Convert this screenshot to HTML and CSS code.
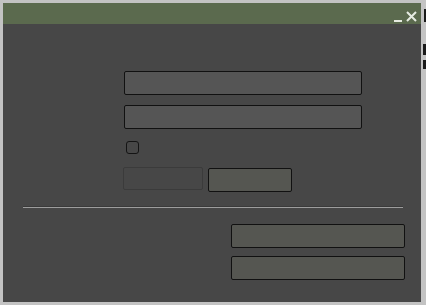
FILE: index.html
```html
<!DOCTYPE html>
<html>
<head>
<meta charset="utf-8">
<link rel="stylesheet" href="styles.css">
</head>
<body>
<div class="screen">
  <div class="window">
    <div class="titlebar">
      <svg class="ctl" width="30" height="14" viewBox="0 0 30 14">
        <rect x="3" y="9" width="8" height="2" fill="#e6ebe2"/>
        <path d="M16 1 L25 10 M25 1 L16 10" stroke="#e6ebe2" stroke-width="2" fill="none"/>
      </svg>
    </div>
    <div class="content">
      <div class="form">
        <div class="field"></div>
        <div class="field tall"></div>
        <div class="check"></div>
        <div class="btnrow">
          <div class="btn disabled"></div>
          <div class="btn"></div>
        </div>
      </div>
      <div class="sep"></div>
      <div class="actions">
        <div class="btn wide"></div>
        <div class="btn wide"></div>
      </div>
    </div>
  </div>
  <div class="side">
    <div class="mark m1"></div>
    <div class="mark m2"></div>
    <div class="mark m3"></div>
  </div>
</div>
</body>
</html>
```

FILE: styles.css
```css
html, body {
  margin: 0;
  padding: 0;
  background: #c3c3c3;
  font-family: "Liberation Sans", sans-serif;
}
.screen {
  display: flex;
  padding-top: 3px;
  padding-left: 3px;
  height: 305px;
  box-sizing: border-box;
}
.window {
  width: 418px;
  height: 299px;
  background: #474747;
  display: flex;
  flex-direction: column;
}
.titlebar {
  height: 21px;
  background: #5b6a4e;
  display: flex;
  justify-content: flex-end;
  align-items: flex-start;
  padding-top: 8px;
  padding-right: 0;
  box-sizing: border-box;
}
.ctl {
  display: block;
}
.content {
  flex: 1;
  display: flex;
  flex-direction: column;
}
.form {
  padding-left: 121px;
  padding-top: 47px;
  display: flex;
  flex-direction: column;
}
.field {
  width: 238px;
  height: 24px;
  box-sizing: border-box;
  background: #555555;
  border: 1px solid #111;
  border-radius: 2px;
}
.field + .field {
  margin-top: 10px;
}
.check {
  margin-top: 12px;
  margin-left: 2px;
  width: 13px;
  height: 13px;
  box-sizing: border-box;
  border: 1px solid #141414;
  border-radius: 3px;
  background: #474747;
}
.btnrow {
  margin-top: 13px;
  margin-left: -1px;
  display: flex;
  gap: 5px;
  align-items: flex-start;
}
.btn {
  width: 84px;
  height: 24px;
  box-sizing: border-box;
  background: #555651;
  border: 1px solid #111;
  border-radius: 2px;
  margin-top: 1px;
}
.btn.disabled {
  width: 80px;
  height: 23px;
  margin-top: 0;
  background: #474747;
  border-color: #3b3b3b;
}
.sep {
  margin: 14px 18px 0 20px;
  border-top: 1px solid #3a3a3a;
  background: #9d9d9d;
  height: 1px;
}
.actions {
  margin-top: 16px;
  align-self: flex-end;
  margin-right: 16px;
  display: flex;
  flex-direction: column;
  gap: 8px;
}
.btn.wide {
  width: 174px;
  margin-top: 0;
}
.side {
  flex: 1;
  display: flex;
  flex-direction: column;
  align-items: flex-end;
  padding-top: 6px;
}
.mark {
  background: #1a1a1a;
}
.m1 { width: 2px; height: 13px; }
.m2 { width: 3px; height: 11px; margin-top: 22px; }
.m3 { width: 3px; height: 9px; margin-top: 5px; }
```
